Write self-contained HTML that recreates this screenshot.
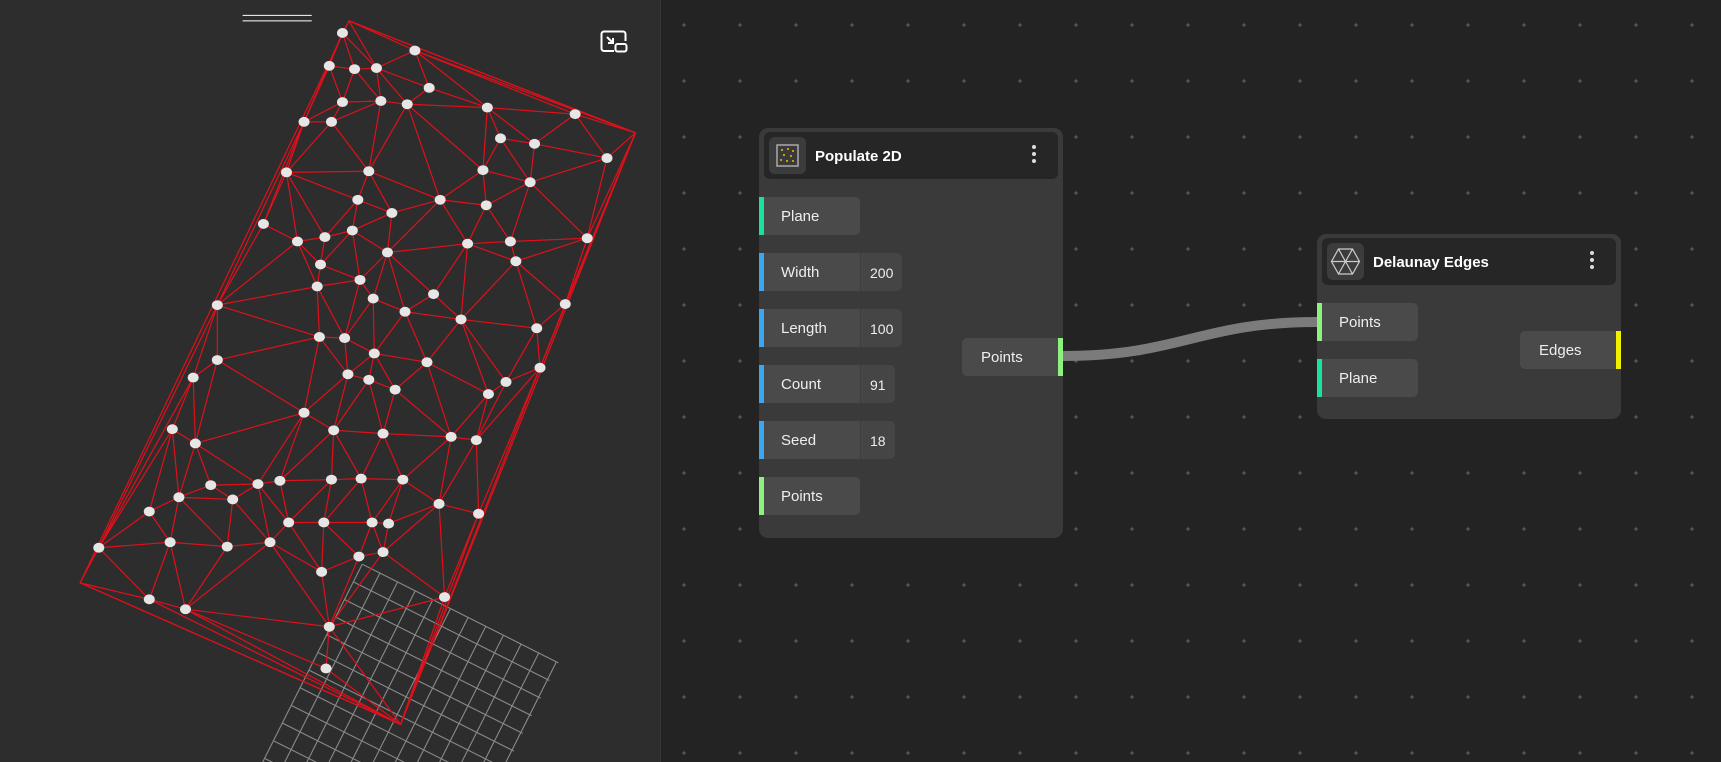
<!DOCTYPE html>
<html><head><meta charset="utf-8"><style>
html,body{margin:0;width:1721px;height:762px;overflow:hidden}
body{background:#232323;font-family:"Liberation Sans",sans-serif;position:relative}
svg{display:block}
#left{position:absolute;left:0;top:0;width:660px;height:762px;background:#2d2d2d;border-right:1px solid #353535;overflow:hidden}
#canvas{position:absolute;left:661px;top:0;width:1060px;height:762px;
background-image:radial-gradient(circle,#555 1.4px,transparent 1.9px);background-size:56px 56px;background-position:-5px -3px}
.node{position:absolute;background:#3a3a3a;border-radius:9px}
.hdr{position:absolute;left:5px;right:5px;top:4px;height:47px;background:#262626;border-radius:6px}
.ico{position:absolute;left:5px;top:5px;width:37px;height:37px;background:#3c3c3c;border-radius:6px}
.ttl{position:absolute;left:51px;top:16px;color:#fff;font-weight:bold;font-size:15px}
.dots{position:absolute;right:22px;top:13px;width:4px}
.dots i{display:block;width:4px;height:4px;background:#ddd;border-radius:2px;margin-bottom:3px}
.row{position:absolute;height:38px;background:#4a4a4a;border-radius:0 5px 5px 0;color:#eee;font-size:15px;line-height:40px}
.row span{position:absolute;left:22px}
.row .v{position:absolute;left:101px;right:0;top:0;bottom:0;background:#454545;border-left:1px solid #3e3e3e;border-radius:0 5px 5px 0;text-indent:9px;font-size:14px}
.bar{position:absolute;top:0;width:5px;height:38px}
.out{border-radius:5px 0 0 5px}
</style></head><body>
<div id="left">
<svg id="vp" width="660" height="762" viewBox="0 0 601.3 694.2" style="position:absolute;left:0;top:0">
<g transform="translate(330,514) rotate(26.7)" stroke="#8a8a8a" stroke-width="1" fill="none" id="grid"></g>
<g id="tri" stroke="#e0101a" stroke-width="1.1" fill="none"></g>
<g id="pts" fill="#e6e6e6"></g>
<line x1="221" y1="14" x2="284" y2="14" stroke="#fff" stroke-width="1"/>
<line x1="221" y1="19" x2="284" y2="19" stroke="#fff" stroke-width="1"/>
</svg>
<svg style="position:absolute;left:600px;top:30px" width="28" height="23" viewBox="0 0 28 23" fill="none" stroke="#fff" stroke-width="2">
<path d="M14 21H4a2.5 2.5 0 0 1-2.5-2.5V4A2.5 2.5 0 0 1 4 1.5h19A2.5 2.5 0 0 1 25.5 4v7"/>
<rect x="15.5" y="14" width="11" height="7.5" rx="2"/>
<path d="M7 7l6 6M13 8v5H8"/>
</svg>
</div>
<div id="canvas"></div>
<svg style="position:absolute;left:0;top:0" width="1721" height="762">
<path d="M1063 356 C1180 356 1200 322 1317 322" stroke="#7b7b7b" stroke-width="10" fill="none"/>
</svg>

<div class="node" style="left:759px;top:128px;width:304px;height:410px">
 <div class="hdr"><div class="ico"><svg width="37" height="37"><rect x="8" y="8" width="21" height="21" fill="#3a3a3a" stroke="#aaa" stroke-width="1.5"/><g fill="#e8c000"><circle cx="13" cy="13" r="1"/><circle cx="19" cy="12" r="1"/><circle cx="24" cy="14" r="1"/><circle cx="15" cy="18" r="1"/><circle cx="22" cy="19" r="1"/><circle cx="12" cy="23" r="1"/><circle cx="18" cy="24" r="1"/><circle cx="24" cy="24" r="1"/></g></svg></div><div class="ttl">Populate 2D</div><div class="dots"><i></i><i></i><i></i></div></div>
 <div class="row" style="left:0;top:69px;width:101px"><div class="bar" style="left:0;background:#19e39a"></div><span>Plane</span></div>
 <div class="row" style="left:0;top:125px;width:143px"><div class="bar" style="left:0;background:#3aa8f0"></div><span>Width</span><div class="v">200</div></div>
 <div class="row" style="left:0;top:181px;width:143px"><div class="bar" style="left:0;background:#3aa8f0"></div><span>Length</span><div class="v">100</div></div>
 <div class="row" style="left:0;top:237px;width:136px"><div class="bar" style="left:0;background:#3aa8f0"></div><span>Count</span><div class="v">91</div></div>
 <div class="row" style="left:0;top:293px;width:136px"><div class="bar" style="left:0;background:#3aa8f0"></div><span>Seed</span><div class="v">18</div></div>
 <div class="row" style="left:0;top:349px;width:101px"><div class="bar" style="left:0;background:#8ef07e"></div><span>Points</span></div>
 <div class="row out" style="left:203px;top:210px;width:101px"><div class="bar" style="right:0;background:#8ef07e"></div><span style="left:19px">Points</span></div>
</div>

<div class="node" style="left:1317px;top:234px;width:304px;height:185px">
 <div class="hdr"><div class="ico"><svg width="37" height="37" fill="none" stroke="#ccc" stroke-width="1.2"><path d="M11.5 6h14l7 12.5-7 12.5h-14l-7-12.5z M11.5 6l14 25 M25.5 6l-14 25 M4.5 18.5h28"/></svg></div><div class="ttl">Delaunay Edges</div><div class="dots"><i></i><i></i><i></i></div></div>
 <div class="row" style="left:0;top:69px;width:101px"><div class="bar" style="left:0;background:#8ef07e"></div><span>Points</span></div>
 <div class="row" style="left:0;top:125px;width:101px"><div class="bar" style="left:0;background:#19e39a"></div><span>Plane</span></div>
 <div class="row out" style="left:203px;top:97px;width:101px"><div class="bar" style="right:0;background:#f0f000"></div><span style="left:19px">Edges</span></div>
</div>

<script>
var NS="http://www.w3.org/2000/svg";
function el(p,t,a){var e=document.createElementNS(NS,t);for(var k in a)e.setAttribute(k,a[k]);p.appendChild(e);return e;}
var g=document.getElementById("grid");
var W=200,H=320,c=18;
for(var x=0;x<=W;x+=c)el(g,"line",{x1:x,y1:0,x2:x,y2:H});
for(var y=0;y<=H;y+=c)el(g,"line",{x1:0,y1:y,x2:W,y2:y});
var P=[[312,30],[378,46],[300,60],[323,63],[343,62],[391,80],[277,111],[302,111],[312,93],[347,92],[371,95],[444,98],[524,104],[456,126],[487,131],[553,144],[261,157],[336,156],[440,155],[483,166],[326,182],[357,194],[401,182],[443,187],[240,204],[271,220],[296,216],[321,210],[426,222],[465,220],[535,217],[292,241],[353,230],[470,238],[328,255],[289,261],[395,268],[340,272],[198,278],[515,277],[369,284],[420,291],[489,299],[291,307],[314,308],[341,322],[389,330],[492,335],[198,328],[176,344],[317,341],[336,346],[360,355],[461,348],[445,359],[277,376],[304,392],[157,391],[178,404],[349,395],[411,398],[434,401],[192,442],[235,441],[255,438],[302,437],[329,436],[367,437],[212,455],[400,459],[436,468],[136,466],[163,453],[263,476],[295,476],[354,477],[90,499],[155,494],[207,498],[246,494],[339,476],[349,503],[327,507],[293,521],[405,544],[136,546],[169,555],[300,571],[297,609]];
var C=[[318,19],[579,121],[365,660],[73,531]];
var all=P.concat(C);
var pts=all.slice();var n=pts.length;
pts.push([-5000,-5000],[5000,-5000],[0,6000]);
var T=[[n,n+1,n+2]];
function cc(t){var a=pts[t[0]],b=pts[t[1]],d=pts[t[2]];var D=2*(a[0]*(b[1]-d[1])+b[0]*(d[1]-a[1])+d[0]*(a[1]-b[1]));
var ux=((a[0]*a[0]+a[1]*a[1])*(b[1]-d[1])+(b[0]*b[0]+b[1]*b[1])*(d[1]-a[1])+(d[0]*d[0]+d[1]*d[1])*(a[1]-b[1]))/D;
var uy=((a[0]*a[0]+a[1]*a[1])*(d[0]-b[0])+(b[0]*b[0]+b[1]*b[1])*(a[0]-d[0])+(d[0]*d[0]+d[1]*d[1])*(b[0]-a[0]))/D;
return [ux,uy,(a[0]-ux)*(a[0]-ux)+(a[1]-uy)*(a[1]-uy)];}
for(var i=0;i<n;i++){var p=pts[i];var bad=[],keep=[];
T.forEach(function(t){var c=cc(t);if((p[0]-c[0])*(p[0]-c[0])+(p[1]-c[1])*(p[1]-c[1])<c[2])bad.push(t);else keep.push(t);});
var ed={};bad.forEach(function(t){for(var j=0;j<3;j++){var a=t[j],b=t[(j+1)%3];var k=a<b?a+"_"+b:b+"_"+a;ed[k]=(ed[k]||0)+1;}});
for(var k in ed)if(ed[k]==1){var s=k.split("_");keep.push([+s[0],+s[1],i]);}
T=keep;}
var tg=document.getElementById("tri"),done={};
T.forEach(function(t){for(var j=0;j<3;j++){var a=t[j],b=t[(j+1)%3];if(a>=n||b>=n)continue;var k=a<b?a+"_"+b:b+"_"+a;if(done[k])continue;done[k]=1;
el(tg,"line",{x1:pts[a][0],y1:pts[a][1],x2:pts[b][0],y2:pts[b][1]});}});
el(tg,"polygon",{points:C.map(function(q){return q.join(",")}).join(" ")});
var pg=document.getElementById("pts");
P.forEach(function(q){el(pg,"ellipse",{cx:q[0],cy:q[1],rx:5,ry:4.5});});
</script>
</body></html>
